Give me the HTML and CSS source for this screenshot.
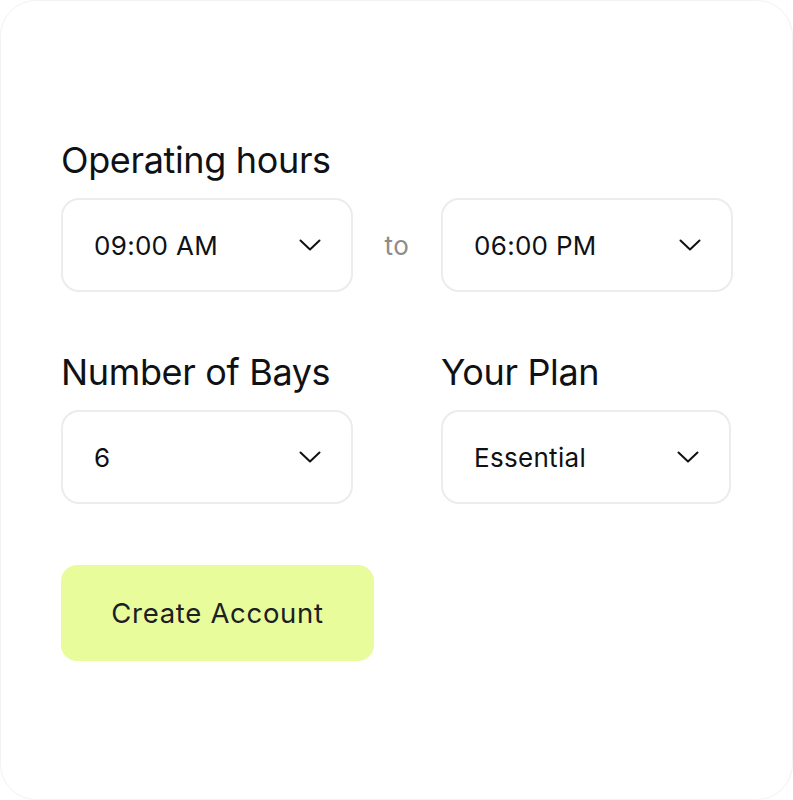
FILE: index.html
```html
<!DOCTYPE html>
<html>
<head>
<meta charset="utf-8">
<link rel="stylesheet" href="styles.css">
</head>
<body>
<div class="card">
  <section class="group">
    <div class="label">Operating hours</div>
    <div class="hours">
      <div class="select"><span>09:00 AM</span><svg class="chev" viewBox="0 0 22 12"><path d="M1.5 1.5 L11 10.5 L20.5 1.5"/></svg></div>
      <div class="to">to</div>
      <div class="select"><span>06:00 PM</span><svg class="chev" viewBox="0 0 22 12"><path d="M1.5 1.5 L11 10.5 L20.5 1.5"/></svg></div>
    </div>
  </section>
  <section class="pair">
    <div class="field">
      <div class="label">Number of Bays</div>
      <div class="select"><span>6</span><svg class="chev" viewBox="0 0 22 12"><path d="M1.5 1.5 L11 10.5 L20.5 1.5"/></svg></div>
    </div>
    <div class="field">
      <div class="label">Your Plan</div>
      <div class="select narrow"><span>Essential</span><svg class="chev" viewBox="0 0 22 12"><path d="M1.5 1.5 L11 10.5 L20.5 1.5"/></svg></div>
    </div>
  </section>
  <button class="cta">Create Account</button>
</div>
</body>
</html>
```
FILE: styles.css
```css
* { box-sizing: border-box; }
html, body { margin: 0; padding: 0; background: #ffffff; }
body { font-family: Inter, "Noto Sans", sans-serif; color: #0f1114; }
.card {
  width: 793px;
  height: 800px;
  border: 1px solid #f2f2f2;
  border-radius: 36px;
  background: #fff;
  padding: 137px 0 0 60px;
}
.label {
  font-size: 36px;
  line-height: 44px;
  font-weight: 400;
  letter-spacing: -0.35px;
  margin-bottom: 16px;
}
.hours {
  display: grid;
  grid-template-columns: 292px 88px 292px;
  align-items: center;
}
.to {
  text-align: center;
  font-size: 26px;
  letter-spacing: 0.5px;
  color: #8c8c8c;
}
.select {
  height: 94px;
  border: 2px solid #ececec;
  border-radius: 18px;
  display: flex;
  align-items: center;
  justify-content: space-between;
  padding: 0 30px 0 31px;
  font-size: 26px;
  letter-spacing: 0.3px;
}
.select.narrow { width: 290px; }
.chev { width: 22px; height: 12px; fill: none; stroke: #111; stroke-width: 2; stroke-linecap: round; stroke-linejoin: round; }
.pair {
  margin-top: 58px;
  display: grid;
  grid-template-columns: 292px 290px;
  column-gap: 88px;
}
.cta {
  display: block;
  margin-top: 61px;
  width: 313px;
  height: 96px;
  border: none;
  border-radius: 16px;
  background: #e8fc9b;
  font-family: inherit;
  font-size: 27.5px;
  letter-spacing: 0.7px;
  color: #1c2024;
}
```
